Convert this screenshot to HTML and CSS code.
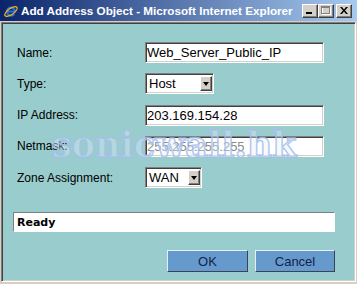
FILE: index.html
```html
<!DOCTYPE html>
<html>
<head>
<meta charset="utf-8">
<title>Add Address Object</title>
<link rel="stylesheet" href="styles.css">
</head>
<body>
<div class="window">
  <div class="titlebar">
    <svg class="ie-icon" width="16" height="16" viewBox="0 0 16 16">
      <path d="M4 8.5 H12 A4 4 0 1 0 11.2 11" fill="none" stroke="#2b6fd6" stroke-width="2.2"/>
      <ellipse cx="8" cy="8.5" rx="7.3" ry="3" transform="rotate(-35 8 8.5)" fill="none" stroke="#f2b21e" stroke-width="1.2"/>
    </svg>
    <span class="title">Add Address Object - Microsoft Internet Explorer</span>
    <div class="tb-buttons">
      <span class="tb-btn"><svg width="8" height="7" viewBox="0 0 8 7"><rect x="0" y="5" width="6" height="2" fill="#000"/></svg></span>
      <span class="tb-btn"><svg width="10" height="9" viewBox="0 0 10 9"><rect x="1.5" y="1.5" width="8" height="7" fill="none" stroke="#fff"/><rect x="0.5" y="0.5" width="8" height="7" fill="none" stroke="#808080"/><rect x="0.5" y="1" width="8" height="1" fill="#808080"/></svg></span>
      <span class="tb-btn close"><svg width="8" height="7" viewBox="0 0 8 7"><path d="M0 0 L2 0 L4 2.5 L6 0 L8 0 L5 3.5 L8 7 L6 7 L4 4.5 L2 7 L0 7 L3 3.5 Z" fill="#000"/></svg></span>
    </div>
  </div>
  <div class="frame">
    <div class="client">
      <div class="form">
        <label class="label">Name:</label>
        <div class="field">Web_Server_Public_IP</div>
        <label class="label">Type:</label>
        <div class="field select host"><span>Host</span><span class="arrow"></span></div>
        <label class="label">IP Address:</label>
        <div class="field">203.169.154.28</div>
        <label class="label">Netmask:</label>
        <div class="field disabled">255.255.255.255</div>
        <label class="label">Zone Assignment:</label>
        <div class="field select wan"><span>WAN</span><span class="arrow"></span></div>
      </div>
      <div class="status">Ready</div>
      <div class="actions">
        <button class="btn ok">OK</button>
        <button class="btn cancel">Cancel</button>
      </div>
      <div class="watermark">sonicwall.hk</div>
    </div>
  </div>
</div>
</body>
</html>
```

FILE: styles.css
```css
* { box-sizing: border-box; }
html, body { margin: 0; padding: 0; }
body {
  width: 357px;
  height: 284px;
  overflow: hidden;
  background: #d4d0c8;
  font-family: "Liberation Sans", Arial, sans-serif;
}
.window {
  width: 357px;
  height: 284px;
  display: flex;
  flex-direction: column;
  background: #d4d0c8;
}
.titlebar {
  height: 21px;
  flex: none;
  display: flex;
  align-items: center;
  padding: 0 5px 0 3px;
  background: linear-gradient(to right, #0a246a, #a6caf0);
}
.ie-icon { flex: none; margin-right: 2px; }
.title {
  flex: 1;
  color: #fff;
  font-weight: bold;
  font-size: 11.7px;
  white-space: nowrap;
  overflow: hidden;
}
.tb-buttons { display: flex; flex: none; }
.tb-btn {
  width: 16px;
  height: 14px;
  background: #d4d0c8;
  border: 1px solid;
  border-color: #fff #404040 #404040 #fff;
  box-shadow: inset -1px -1px #808080;
  display: flex;
  align-items: center;
  justify-content: center;
}
.tb-btn.close { margin-left: 2px; }
.frame {
  flex: 1;
  display: flex;
  padding: 1px 1px 2px 1px;
}
.client {
  flex: 1;
  position: relative;
  background: #99cccc;
  border: 1px solid;
  border-color: #808080 #fff #fff #808080;
  box-shadow: inset 1px 1px #404040, inset -1px -1px #d4d0c8;
  padding: 19px 20px 0 11px;
}
.form {
  display: grid;
  grid-template-columns: 128px 179px;
  grid-auto-rows: 21px;
  row-gap: 10.3px;
  align-items: center;
  padding-left: 4px;
}
.label {
  font-size: 12px;
  color: #000;
}
.field {
  height: 21px;
  background: #fff;
  border: 1px solid;
  border-color: #808080 #fff #fff #808080;
  box-shadow: inset 1px 1px #404040, inset -1px -1px #d4d0c8;
  font-size: 13px;
  color: #000;
  display: flex;
  align-items: center;
  padding-left: 1px;
  white-space: nowrap;
}
.field.disabled { color: #8a8a8a; }
.select {
  justify-content: space-between;
  padding: 0 1px 0 3px;
}
.select.host { width: 69px; }
.select.wan { width: 57px; }
.arrow {
  width: 12px;
  height: 15px;
  background: #d4d0c8;
  border: 1px solid;
  border-color: #fff #404040 #404040 #fff;
  box-shadow: inset -1px -1px #808080;
  position: relative;
}
.arrow::after {
  content: "";
  position: absolute;
  left: 2px;
  top: 5px;
  border-left: 3.5px solid transparent;
  border-right: 3.5px solid transparent;
  border-top: 4px solid #000;
}
.status {
  margin-top: 24px;
  height: 20px;
  background: #fff;
  border: 1px solid;
  border-color: #808080 #fff #fff #808080;
  font-family: "DejaVu Sans", sans-serif;
  font-weight: bold;
  font-size: 11px;
  color: #000;
  padding-left: 3px;
  display: flex;
  align-items: center;
}
.actions {
  margin-top: 18px;
  display: flex;
  justify-content: flex-end;
  gap: 7px;
}
.btn {
  height: 22px;
  margin: 0;
  padding: 0;
  background: #6699cc;
  border: 1px solid;
  border-color: #e6eef8 #3a4458 #3a4458 #e6eef8;
  font-family: "Liberation Sans", Arial, sans-serif;
  font-size: 13px;
  color: #14224a;
}
.btn.ok { width: 81px; }
.btn.cancel { width: 80px; }
.watermark {
  position: absolute;
  left: 50px;
  top: 104px;
  font-family: "DejaVu Serif", serif;
  font-weight: bold;
  font-size: 35px;
  line-height: 35px;
  color: rgba(230, 242, 255, 0.35);
  -webkit-text-stroke: 1.5px rgba(165, 190, 235, 0.85);
  pointer-events: none;
  white-space: nowrap;
}
```
